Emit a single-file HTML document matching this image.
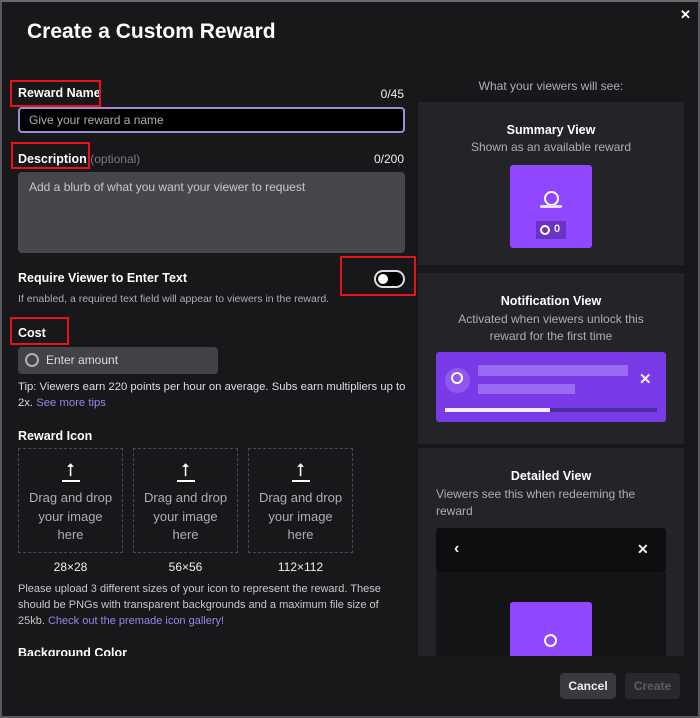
<!DOCTYPE html>
<html><head><meta charset="utf-8"><style>
*{margin:0;padding:0;box-sizing:border-box}
html,body{width:700px;height:718px;overflow:hidden;background:#18181b}
body{font-family:"Liberation Sans",sans-serif;color:#efeff1;position:relative}
.a{position:absolute}
.frame{left:0;top:0;width:700px;height:718px;border:2px solid #5a5a5e;border-top-color:#6a6a6e}
.b{font-weight:bold;font-size:12.5px;color:#fff}
.g{color:#adadb8}
.red{border:2px solid #e5141a}
.up{border:1px dashed #4a4a50;width:105px;height:105px;text-align:center;font-size:13px;color:#adadb8;line-height:18.5px}
.card{background:#232328;left:418px;width:266px}
.ctr{text-align:center;width:266px;left:0}
.orb{position:absolute;width:15px;height:15px;border:2px solid #fff;border-radius:50%}
</style></head><body>
<div class="a" style="left:27px;top:20px;font-size:21px;font-weight:bold;color:#fff">Create a Custom Reward</div>
<div class="a" style="left:680px;top:7px;font-size:13px;font-weight:bold;color:#fff">✕</div>

<div class="a b" style="left:18px;top:86px">Reward Name</div>
<div class="a red" style="left:10px;top:80px;width:91px;height:27px"></div>
<div class="a" style="right:296px;top:87px;font-size:12px">0/45</div>
<div class="a" style="left:18px;top:107px;width:387px;height:26px;background:#000;border:2px solid #9d8ad8;border-radius:4px;font-size:12px;color:#adadb8;padding:4px 0 0 9px">Give your reward a name</div>

<div class="a b" style="left:18px;top:152px">Description <span style="font-weight:normal;color:#7a7a80;font-size:12px">(optional)</span></div>
<div class="a red" style="left:11px;top:142px;width:79px;height:27px"></div>
<div class="a" style="right:296px;top:152px;font-size:12px">0/200</div>
<div class="a" style="left:18px;top:172px;width:387px;height:81px;background:#47474b;border-radius:4px;font-size:12px;color:#c8c8cc;padding:8px 0 0 11px">Add a blurb of what you want your viewer to request</div>

<div class="a b" style="left:18px;top:271px">Require Viewer to Enter Text</div>
<div class="a red" style="left:340px;top:256px;width:76px;height:40px"></div>
<div class="a" style="left:374px;top:270px;width:31px;height:18px;border:2px solid #dedee3;border-radius:10px;background:#000"></div>
<div class="a" style="left:378px;top:274px;width:10px;height:10px;background:#fff;border-radius:50%"></div>
<div class="a g" style="left:18px;top:293px;font-size:10.5px">If enabled, a required text field will appear to viewers in the reward.</div>

<div class="a b" style="left:18px;top:326px">Cost</div>
<div class="a red" style="left:10px;top:317px;width:59px;height:28px"></div>
<div class="a" style="left:18px;top:347px;width:200px;height:27px;background:#434347;border-radius:4px"></div>
<div class="a" style="left:25px;top:353px;width:14px;height:14px;border:2px solid #adadb8;border-radius:50%"></div>
<div class="a" style="left:46px;top:353px;font-size:12px;color:#dcdce0">Enter amount</div>
<div class="a" style="left:18px;top:379px;width:390px;font-size:11.3px;line-height:16px;color:#dedee3">Tip: Viewers earn 220 points per hour on average. Subs earn multipliers up to 2x. <span style="color:#9b84e8">See more tips</span></div>

<div class="a b" style="left:18px;top:429px">Reward Icon</div>
<div class="a up" style="left:18px;top:448px"><div style="margin-top:12px;font-size:18px;color:#fff;line-height:18px">⭡</div><div style="width:18px;height:2px;background:#fff;margin:1px auto 7px"></div>Drag and drop<br>your image<br>here</div>
<div class="a up" style="left:133px;top:448px"><div style="margin-top:12px;font-size:18px;color:#fff;line-height:18px">⭡</div><div style="width:18px;height:2px;background:#fff;margin:1px auto 7px"></div>Drag and drop<br>your image<br>here</div>
<div class="a up" style="left:248px;top:448px"><div style="margin-top:12px;font-size:18px;color:#fff;line-height:18px">⭡</div><div style="width:18px;height:2px;background:#fff;margin:1px auto 7px"></div>Drag and drop<br>your image<br>here</div>
<div class="a" style="left:18px;top:560px;width:105px;text-align:center;font-size:12px">28×28</div>
<div class="a" style="left:133px;top:560px;width:105px;text-align:center;font-size:12px">56×56</div>
<div class="a" style="left:248px;top:560px;width:105px;text-align:center;font-size:12px">112×112</div>
<div class="a" style="left:18px;top:581px;width:376px;font-size:11px;line-height:16px;color:#c8c8cc">Please upload 3 different sizes of your icon to represent the reward. These should be PNGs with transparent backgrounds and a maximum file size of 25kb. <span style="color:#9b84e8">Check out the premade icon gallery!</span></div>
<div class="a" style="left:0;top:645px;width:415px;height:11px;overflow:hidden"><div class="b" style="position:absolute;left:18px;top:1px">Background Color</div></div>

<div class="a g" style="left:418px;top:79px;width:266px;text-align:center;font-size:12px">What your viewers will see:</div>

<div class="a card" style="top:102px;height:163px">
<div class="a b ctr" style="top:21px">Summary View</div>
<div class="a g ctr" style="top:38px;font-size:12px">Shown as an available reward</div>
<div class="a" style="left:92px;top:63px;width:82px;height:83px;background:#9147ff;border-radius:3px"></div>
<div class="orb" style="left:126px;top:89px"></div>
<div class="a" style="left:122px;top:103px;width:22px;height:3px;background:#e8e0ff;border-radius:2px"></div>
<div class="a" style="left:118px;top:119px;width:30px;height:18px;background:#6a33c4"></div>
<div class="a" style="left:122px;top:123px;width:10px;height:10px;border:2px solid #fff;border-radius:50%"></div>
<div class="a" style="left:136px;top:121px;font-size:11px;font-weight:bold">0</div>
</div>

<div class="a card" style="top:273px;height:171px">
<div class="a b ctr" style="top:21px">Notification View</div>
<div class="a g ctr" style="top:38px;font-size:12px;line-height:17px">Activated when viewers unlock this<br>reward for the first time</div>
<div class="a" style="left:18px;top:79px;width:230px;height:70px;background:#7a3ae8;border-radius:3px"></div>
<div class="a" style="left:27px;top:95px;width:25px;height:25px;background:#9158f0;border-radius:50%"></div>
<div class="orb" style="left:33px;top:99px;width:12px;height:12px"></div>
<div class="a" style="left:60px;top:92px;width:150px;height:11px;background:#9b6af2"></div>
<div class="a" style="left:60px;top:111px;width:97px;height:10px;background:#9b6af2"></div>
<div class="a" style="left:221px;top:97px;font-size:15px;font-weight:bold">✕</div>
<div class="a" style="left:27px;top:135px;width:212px;height:4px;background:#4f2a9e"></div>
<div class="a" style="left:27px;top:135px;width:105px;height:4px;background:#eee"></div>
</div>

<div class="a card" style="top:448px;height:208px">
<div class="a b ctr" style="top:21px">Detailed View</div>
<div class="a g" style="left:18px;top:38px;font-size:12px;line-height:17px;width:212px">Viewers see this when redeeming the reward</div>
<div class="a" style="left:18px;top:80px;width:230px;height:44px;background:#0e0e10;border-radius:3px"></div>
<div class="a" style="left:36px;top:92px;font-size:16px;font-weight:bold">‹</div>
<div class="a" style="left:219px;top:93px;font-size:14px;font-weight:bold">✕</div>
<div class="a" style="left:18px;top:124px;width:230px;height:84px;background:#141416"></div>
<div class="a" style="left:92px;top:154px;width:82px;height:54px;background:#9147ff;border-radius:3px 3px 0 0"></div>
<div class="orb" style="left:126px;top:186px;width:13px;height:13px"></div>
</div>

<div class="a" style="left:560px;top:673px;width:56px;height:26px;background:#3a3a3e;border-radius:4px;font-size:12px;font-weight:bold;text-align:center;line-height:26px">Cancel</div>
<div class="a" style="left:625px;top:673px;width:55px;height:26px;background:#29292d;border-radius:4px;font-size:12px;font-weight:bold;text-align:center;line-height:26px;color:#5c5c62">Create</div>
<div class="a frame"></div>
</body></html>
